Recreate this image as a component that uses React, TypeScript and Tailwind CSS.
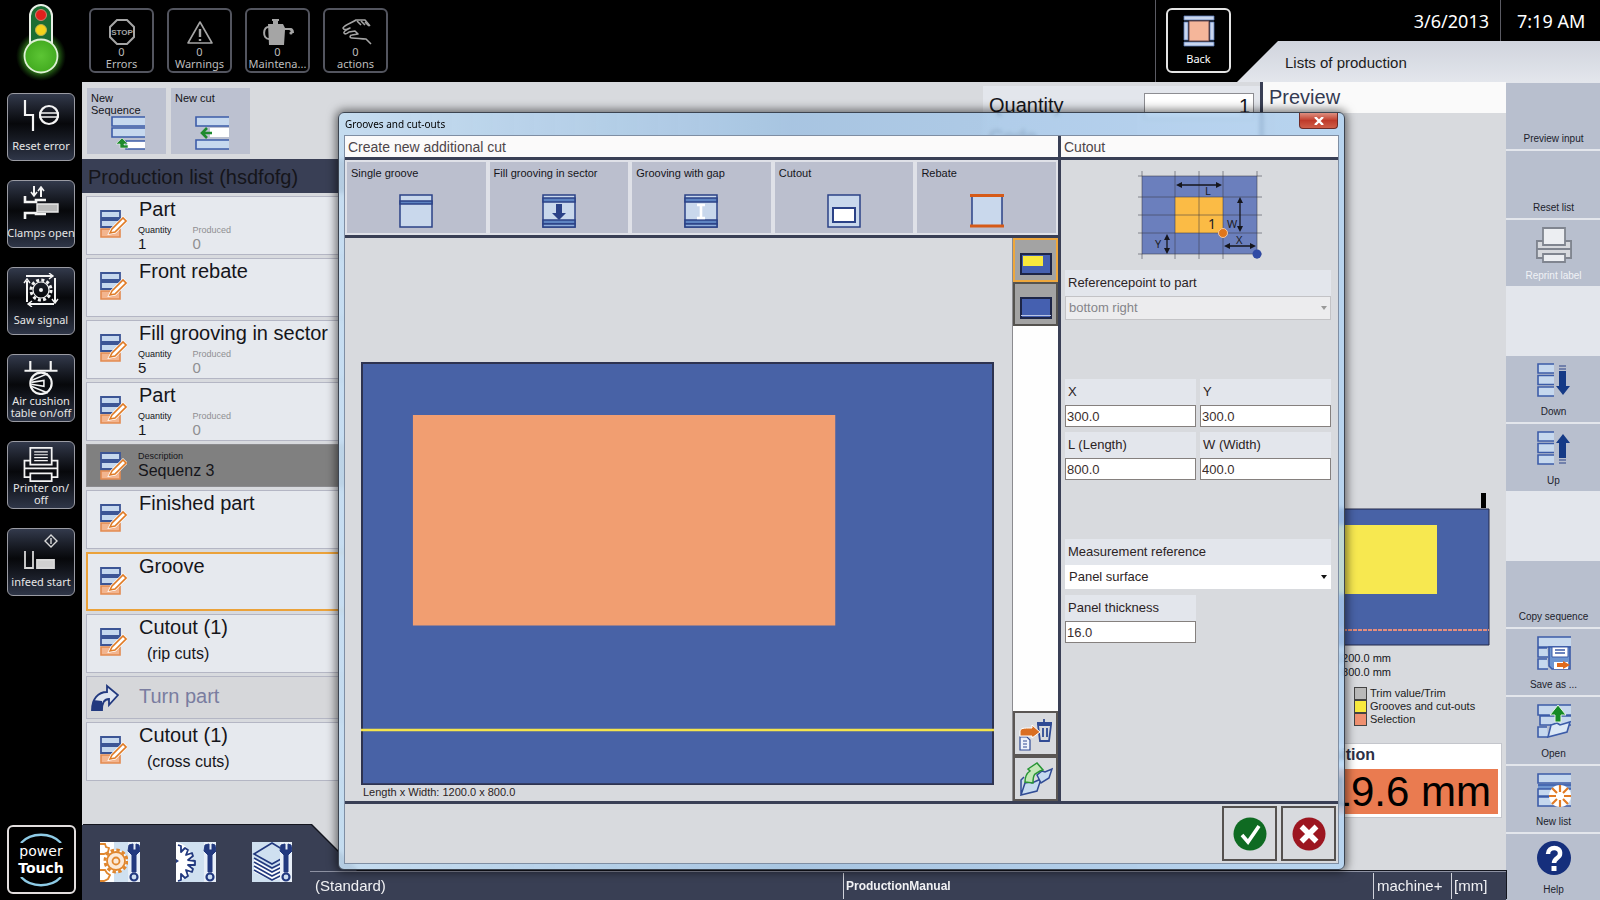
import type { ReactNode } from "react";

const NAVY = "#2b4287";
const PALE = "#c6d8ee";

/* ---------- status and machine icons ---------- */

function TrafficLight() {
  return (
    <svg viewBox="0 0 60 82" className="h-[82px] w-[60px]" role="img" aria-label="Machine status">
      <defs>
        <radialGradient id="halo">
          <stop offset="60%" stopColor="#4fc02c" stopOpacity="0.75" />
          <stop offset="100%" stopColor="#2a7a18" stopOpacity="0" />
        </radialGradient>
        <radialGradient id="bulb">
          <stop offset="0%" stopColor="#5cc534" />
          <stop offset="100%" stopColor="#43ab20" />
        </radialGradient>
      </defs>
      <circle cx="30" cy="56" r="25" fill="url(#halo)" />
      <path d="M19 44V16a11 11 0 0 1 22 0v28z" fill="#1b6d33" stroke="#e9efe6" strokeWidth="2" />
      <circle cx="30" cy="15" r="5.500" fill="#e0201c" stroke="#c98470" strokeWidth="1" />
      <circle cx="30" cy="30" r="5.500" fill="#f2d21c" stroke="#b9b04e" strokeWidth="1" />
      <circle cx="30" cy="56" r="16.500" fill="url(#bulb)" stroke="#dff0d6" strokeWidth="1.8" />
    </svg>
  );
}

function StopIcon() {
  return (
    <svg viewBox="0 0 28 28" className="size-7" fill="none" stroke="#a5a5a5">
      <path d="M9 2h10l7 7v10l-7 7H9l-7-7V9z" strokeWidth="2" />
      <text x="14" y="17" textAnchor="middle" fontSize="8" fontWeight="700" fontFamily="Liberation Sans" fill="#a5a5a5" stroke="none">
        STOP
      </text>
    </svg>
  );
}

function WarningIcon() {
  return (
    <svg viewBox="0 0 28 28" className="size-7" fill="none" stroke="#a5a5a5" strokeWidth="1.6">
      <path d="M14 4l12 21H2z" strokeLinejoin="round" />
      <path d="M14 11v8M14 21v2" strokeWidth="2.4" />
    </svg>
  );
}

function OilCanIcon() {
  return (
    <svg viewBox="0 0 32 28" className="h-7 w-8" fill="#a5a5a5">
      <path d="M6 6h5V3h-1V1h7v2h-1v3h5l2 4h5c3 0 4 2 4 5h-3c0-2-1-3-2-3h-4l-1 15H7z" />
      <path d="M7 9c-6-1-7 12 0 12" fill="none" stroke="#a5a5a5" strokeWidth="2" />
      <circle cx="29" cy="15" r="1.6" />
    </svg>
  );
}

function HandIcon() {
  return (
    <svg viewBox="0 0 32 28" className="h-7 w-8" fill="none" stroke="#a5a5a5" strokeWidth="1.6" strokeLinejoin="round">
      <path d="M31 26l-5-5c-5 0-9-1-14-1-3 0-2-3 0-3l6-1-3-3-6 1c-1 1-4 3-5 1s5-4 6-5c-3 1-6 3-7 0 2-4 9-5 13-8h9l5 6" />
      <path d="M17 3l4 4M21 3l4 4M25 4l4 4" />
    </svg>
  );
}

function BackIcon() {
  return (
    <svg viewBox="0 0 32 32" className="size-8">
      <path d="M1 1h30v4H1zM1 27h30v4H1zM1 7h4v18H1zM27 7h4v18h-4z" fill="#c9d6ee" stroke="#5b7bb8" strokeWidth="0.8" />
      <path d="M6 6h20v20H6z" fill="#f5b69a" stroke="#6b4a50" strokeWidth="1" />
    </svg>
  );
}

function ResetIcon() {
  return (
    <svg viewBox="0 0 36 34" className="h-[34px] w-9" fill="none" stroke="#f4f4f4" strokeWidth="2.2">
      <path d="M2 1v15h8v16" />
      <circle cx="26" cy="16" r="9" />
      <path d="M16 14h20M16 18h20" strokeWidth="1.6" />
    </svg>
  );
}

function ClampIcon() {
  return (
    <svg viewBox="0 0 36 34" className="h-[34px] w-9" fill="none" stroke="#f4f4f4" strokeWidth="2.6">
      <path d="M2 10v6h11v-2h10M2 33v-6h11v1h10" />
      <path d="M14 18h21v8H14z" fill="#b9b9b9" stroke="#e8e8e8" strokeWidth="1.4" />
      <path d="M11 0v9M18 11V2" strokeWidth="2" />
      <path d="M8 6l3 4 3-4M15 5l3-4 3 4" strokeWidth="1.6" />
    </svg>
  );
}

function SawIcon() {
  return (
    <svg viewBox="0 0 36 34" className="h-[34px] w-9" fill="none" stroke="#f4f4f4" strokeWidth="2">
      <path d="M3 3h26M32 5v24M31 31H6M4 29V8" />
      <path d="M26 0l4 3-4 3M29 26l3 4 3-4M9 28l-4 3 4 3M1 10l3-4 3 4" strokeWidth="1.4" />
      <circle cx="18" cy="17" r="10" strokeWidth="3" strokeDasharray="3 2.24" />
      <circle cx="18" cy="17" r="8" strokeWidth="1.2" />
      <circle cx="18" cy="17" r="2" fill="#f4f4f4" stroke="none" />
    </svg>
  );
}

function AirIcon() {
  return (
    <svg viewBox="0 0 36 36" className="size-9" fill="none" stroke="#f4f4f4" strokeWidth="2.2">
      <path d="M7 1v9M28 1v9M1 11h34" />
      <circle cx="18" cy="24" r="11" />
      <path d="M8 21l17-7M8 27l17 7M8 23l13-2v6l-13-2" strokeWidth="1.6" />
    </svg>
  );
}

function PrinterIcon({ pale = false }: { pale?: boolean }) {
  const stroke = pale ? "#808590" : "#f4f4f4";
  const fill = pale ? "#eceef2" : "none";
  return (
    <svg viewBox="0 0 36 36" className="size-9" fill={fill} stroke={stroke} strokeWidth="1.8">
      <path d="M7 14H1v17h6M29 14h6v17h-6" fill={pale ? "#d7d9de" : "none"} />
      {pale && <path d="M1 14h34v17H1z" fill="#d7d9de" />}
      <path d="M7 18V1h22v17z" />
      <path d="M1 22h34" />
      <path d="M7 27h22v8H7z" />
      {!pale && <path d="M11 5h14M11 8h14M11 11h14M11 14h14" strokeWidth="1.2" />}
    </svg>
  );
}

function InfeedIcon() {
  return (
    <svg viewBox="0 0 36 36" className="size-9" fill="none" stroke="#d8d8d8" strokeWidth="1.8">
      <path d="M2 17v17h8V17" />
      <path d="M14 26h17v8H14z" fill="#d0d0d0" />
      <path d="M28 1l6 6-6 6-6-6zM28 4v6" strokeWidth="1.4" />
    </svg>
  );
}

/* ---------- list and tool icons ---------- */

function EditStackIcon() {
  return (
    <svg viewBox="0 0 28 28" className="size-7 shrink-0" aria-hidden="true">
      <path d="M2 1h19v7H2zM2 10h19v7H2z" fill={PALE} stroke="#3c5595" strokeWidth="1.8" />
      <path d="M2 19h19v8H2z" fill="#f3b58f" stroke="#e38a50" strokeWidth="1.6" />
      <path d="M11 23l2-4L24 8l3 3-11 11z" fill="#fff" stroke="#fff" strokeWidth="3" />
      <path d="M11 23l2-4L24 8l3 3-11 11z" fill="#fff" stroke="#e07b26" strokeWidth="1.6" />
    </svg>
  );
}

function TurnIcon() {
  return (
    <svg viewBox="0 0 28 28" className="size-7 shrink-0" aria-hidden="true">
      <path d="M1 26C1 15 7 8 16 8V2l11 9-9 10v-6c-4 0-7 3-7 11z" fill="#dfe5f0" stroke="#22397f" strokeWidth="1.8" />
      <path d="M2 16l9 1v9H1z" fill="#22397f" />
    </svg>
  );
}

function NewSequenceIcon() {
  return (
    <svg viewBox="0 0 34 34" className="size-[34px]" fill={PALE} stroke="#3c5ca8" strokeWidth="1.6">
      <path d="M34 1H1v9h33M34 12H1v9h33" />
      <path d="M34 25H15v8h19" fill="#fff" />
      <path d="M17 32h-8v-4H5l6-6 6 6h-4v1h4z" fill="#1e8a2e" stroke="#e9f3ea" strokeWidth="0.6" />
    </svg>
  );
}

function NewCutIcon() {
  return (
    <svg viewBox="0 0 34 34" className="size-[34px]" fill={PALE} stroke="#3c5ca8" strokeWidth="1.6">
      <path d="M34 1H1v9h33M34 24H1v9h33" />
      <path d="M15 12h19v9H15z" fill="#fff" stroke="none" />
      <path d="M17 17H8M12 12l-5 5 5 5" fill="none" stroke="#1e8a2e" strokeWidth="2.6" />
    </svg>
  );
}

function GrooveIcon({ kind }: { kind: "single" | "fill" | "gap" | "cutout" | "rebate" }) {
  return (
    <svg viewBox="0 0 34 34" className="size-[34px]" fill="#c9d8ec" stroke={NAVY} strokeWidth="1.5" aria-hidden="true">
      {kind === "single" && (
        <>
          <path d="M1 1h32v32H1z" />
          <path d="M1 7h32v3H1z" fill="#5e84c2" />
        </>
      )}
      {(kind === "fill" || kind === "gap") && (
        <>
          <path d="M1 1h32v32H1z" />
          <path d="M1 4h32v4H1zM1 26h32v4H1z" fill="#5e84c2" />
          <path d="M1 30h32v3H1z" fill="#8faedb" />
        </>
      )}
      {kind === "fill" && <path d="M14 10h6v9h4l-7 7-7-7h4z" fill={NAVY} stroke="none" />}
      {kind === "gap" && <path d="M17 11v13M13 11h8M13 24h8" stroke="#fff" strokeWidth="2.6" />}
      {kind === "cutout" && (
        <>
          <path d="M1 1h32v32H1z" />
          <path d="M6 14h22v14H6z" fill="#fff" strokeWidth="2" />
        </>
      )}
      {kind === "rebate" && (
        <>
          <path d="M2 2h30v30H2z" />
          <path d="M0 1.5h34M0 32h34" stroke="#d65a17" strokeWidth="2.8" />
        </>
      )}
    </svg>
  );
}

function StackBase({ children }: { children: ReactNode }) {
  return (
    <svg viewBox="0 0 34 34" className="size-[34px]" fill={PALE} stroke="#3c5ca8" strokeWidth="1.6" aria-hidden="true">
      {children}
    </svg>
  );
}

const downIcon = (
  <StackBase>
    <path d="M17 1H1v9h16M17 12.500H1v9h16M17 24H1v9h16" />
    <path d="M22 3h7M22 6h7" stroke={NAVY} strokeWidth="1.2" />
    <path d="M22 8h7v15h4l-7 9-7-9h3z" fill="#153a86" stroke="none" />
  </StackBase>
);
const upIcon = (
  <StackBase>
    <path d="M17 1H1v9h16M17 12.500H1v9h16M17 24H1v9h16" />
    <path d="M22 29h7M22 32h7" stroke={NAVY} strokeWidth="1.2" />
    <path d="M22 27h7V12h4l-7-9-7 9h3z" fill="#153a86" stroke="none" />
  </StackBase>
);
const saveIcon = (
  <StackBase>
    <path d="M34 1H1v10h33M10 12H1v9h10M10 23H1v10h10" />
    <path d="M12 11h21v22H15l-3-3z" fill="#6e95d0" />
    <path d="M15 11h16v10H15z" fill="#fff" strokeWidth="1" />
    <path d="M18 14h10M18 17h10" strokeWidth="1.4" />
    <path d="M17 26h14v7H17z" fill="#fff" stroke="none" />
    <path d="M20 27h6v-2l7 4-7 4v-2h-6z" fill="#e06a1c" stroke="none" />
  </StackBase>
);
const openIcon = (
  <StackBase>
    <path d="M34 1H1v10h33M34 12H3v9h31M10 23H1v10h10" />
    <path d="M11 33l3-12 6-2 3 2 10-3-3 10z" fill="#dbe8f6" />
    <path d="M18 18v-7h-5l8-10 8 10h-5v7z" fill="#158a24" stroke="#e4f2e4" strokeWidth="1" />
  </StackBase>
);
const newListIcon = (
  <StackBase>
    <path d="M34 1H1v9h33" />
    <path d="M34 11H1v5h33" fill="#6e95d0" stroke="none" />
    <path d="M34 12H1M34 16H1v7h33M34 24H1v9h33" />
    <circle cx="23" cy="23" r="11" fill="#fff" stroke="none" />
    <path d="M23 12v7M23 27v7M12 23h7M27 23h7M15 15l5 5M26 26l5 5M31 15l-5 5M20 26l-5 5" stroke="#e17b25" strokeWidth="2.2" />
  </StackBase>
);
const helpIcon = (
  <svg viewBox="0 0 34 34" className="size-[34px]" aria-hidden="true">
    <circle cx="17" cy="17" r="17" fill="#152f7c" />
    <path d="M11 13c0-8 13-8 12 0 0 4-6 4-6 9" fill="none" stroke="#fff" strokeWidth="4.5" />
    <path d="M14.500 25h5v5h-5z" fill="#fff" />
  </svg>
);

function Wrench({ x }: { x: number }) {
  return (
    <g transform={`translate(${x} 0)`} stroke="#22397f" fill="#22397f">
      <path d="M0 3l-1 6 4 4v17h4V13l4-4-1-6-3-1v6H4V2z" />
      <circle cx="5" cy="35" r="3.500" fill="#cfdff0" strokeWidth="2.2" />
    </g>
  );
}

function SettingsIcon({ kind }: { kind: "gears" | "saw" | "layers" }) {
  return (
    <svg viewBox="0 0 40 40" className="size-10" fill="none" aria-hidden="true">
      <path d="M0 0h40v40H0z" fill="#cfe0f0" />
      {kind === "gears" && (
        <g stroke="#e0872f" strokeWidth="1.8">
          <path d="M0 0h14v40H0z" fill="#fff" stroke="none" />
          <circle cx="16" cy="19" r="11" strokeDasharray="3.400 2.360" strokeWidth="3" fill="#fff" />
          <circle cx="16" cy="19" r="9" fill="#fbe9d8" />
          <circle cx="16" cy="19" r="3.500" />
          <path d="M0 2h5l1 3 3 1-1 4-4 2H0M0 28h5l2 3 3 2-2 4-4 2H0" />
        </g>
      )}
      {kind === "saw" && (
        <>
          <path d="M0 0c20 4 25 33 0 40z" fill="#fff" />
          <path
            d="M2 3l3 1v6l4-4 3 2-2 5 6-2 1 3-5 4 7 1v4h-7l5 4-1 3-6-2 2 6-3 2-4-4v6l-3 1"
            stroke="#22397f"
            strokeWidth="1.8"
            strokeLinejoin="round"
          />
          <path d="M0 17l3 2-3 2z" fill="#22397f" />
        </>
      )}
      {kind === "layers" && (
        <>
          <path d="M2 12L20 1l18 11-18 10zM2 17l18 11 18-11v17L20 39 2 30z" fill="#fff" />
          <path d="M2 12L20 1l18 11-18 10z" fill="#cfe0f0" />
          <path d="M2 12L20 1l18 11-18 10zM2 16l18 10 12-6M2 20l18 10 12-6M2 24l18 10 12-6M2 28l18 10 12-6" stroke="#22397f" strokeWidth="1.6" />
        </>
      )}
      <path d="M28 0h12v40H28z" fill="#e8eff8" />
      <Wrench x={29} />
    </svg>
  );
}

/* ---------- top bar and machine rail ---------- */

function StatusButton({ icon, label }: { icon: ReactNode; label: string }) {
  return (
    <button className="flex h-[65px] w-[65px] flex-col items-center justify-end rounded-md border-2 border-[#53555f] bg-black pb-px text-[11px] leading-[12px] text-[#bdbdbd]">
      {icon}
      <span>0</span>
      <span className="whitespace-nowrap">{label}</span>
    </button>
  );
}

function TopBar() {
  return (
    <header className="flex h-[82px] shrink-0 bg-black font-['Noto_Sans',sans-serif] text-white">
      <div className="flex flex-1 gap-[13px] pt-[8px] pl-[7px]">
        <StatusButton icon={<StopIcon />} label="Errors" />
        <StatusButton icon={<WarningIcon />} label="Warnings" />
        <StatusButton icon={<OilCanIcon />} label="Maintena..." />
        <StatusButton icon={<HandIcon />} label="actions" />
      </div>
      <div className="border-l border-[#5b5b63] pt-[8px] pl-[10px]">
        <button className="flex h-[65px] w-[65px] flex-col items-center justify-center gap-[5px] rounded-md border-2 border-[#e4e4e4] bg-black text-[11px] leading-[14px]">
          <BackIcon />
          Back
        </button>
      </div>
      <div className="flex w-[369px] flex-col pl-[6px]">
        <div className="flex h-[41px] justify-end text-[18px] leading-[43px]">
          <time className="pr-[11px]">3/6/2013</time>
          <time className="w-[100px] border-l border-[#5b5b63] pl-[16px]">7:19 AM</time>
        </div>
        <h1 className="flex h-[41px] items-center bg-linear-to-b from-[#d0d4dd] to-[#e3e6ec] pt-[3px] pl-[48px] font-['Liberation_Sans',sans-serif] text-[15px] text-[#1c1c1c] [clip-path:polygon(41px_0,100%_0,100%_100%,0_100%)]">
          Lists of production
        </h1>
      </div>
    </header>
  );
}

const machineActions = [
  { label: "Reset error", icon: <ResetIcon /> },
  { label: "Clamps open", icon: <ClampIcon /> },
  { label: "Saw signal", icon: <SawIcon /> },
  { label: "Air cushion\ntable on/off", icon: <AirIcon /> },
  { label: "Printer on/\noff", icon: <PrinterIcon /> },
  { label: "infeed start", icon: <InfeedIcon /> },
];

function MachineRail() {
  return (
    <nav className="flex w-[82px] shrink-0 flex-col items-center bg-black font-['Noto_Sans',sans-serif] text-white">
      <TrafficLight />
      <div className="mt-[11px] flex flex-col gap-[19px]">
        {machineActions.map((a) => (
          <button
            key={a.label}
            className="flex size-[68px] flex-col items-center rounded-md border border-[#9a9ba3] bg-linear-to-b from-[#333a4c] via-[#07080b] via-45% to-[#2f3648] pt-[5px] pb-[2px] text-[11px] leading-[12px] text-[#e6e6e6]"
          >
            {a.icon}
            <span className="flex flex-1 items-center whitespace-pre">{a.label}</span>
          </button>
        ))}
      </div>
      <button className="mt-auto mb-[6px] flex size-[69px] flex-col items-center justify-center rounded-md border-2 border-[#e2dede] bg-black font-['DejaVu_Sans',sans-serif] text-[14px] leading-[17px]">
        <svg viewBox="0 0 48 10" className="h-[10px] w-12" fill="none" stroke="#8ecbe6" strokeWidth="2.4">
          <path d="M4 10C14-1 34-1 44 10" />
        </svg>
        <span>power</span>
        <b>Touch</b>
        <svg viewBox="0 0 48 10" className="h-[10px] w-12" fill="none" stroke="#8ecbe6" strokeWidth="2.4">
          <path d="M4 0C14 11 34 11 44 0" />
        </svg>
      </button>
    </nav>
  );
}

/* ---------- production list ---------- */

type Item = {
  title: string;
  note?: string;
  quantity?: number;
  kind?: "sequence" | "turn" | "selected";
};

const items: Item[] = [
  { title: "Part", quantity: 1 },
  { title: "Front rebate" },
  { title: "Fill grooving in sector", quantity: 5 },
  { title: "Part", quantity: 1 },
  { title: "Sequenz 3", kind: "sequence" },
  { title: "Finished part" },
  { title: "Groove", kind: "selected" },
  { title: "Cutout (1)", note: "(rip cuts)" },
  { title: "Turn part", kind: "turn" },
  { title: "Cutout (1)", note: "(cross cuts)" },
];

function ListRow({ item }: { item: Item }) {
  if (item.kind === "sequence") {
    return (
      <li className="flex h-[43px] items-center gap-[11px] border border-[#8b8b8e] bg-[#808080] pl-[12px]">
        <EditStackIcon />
        <div className="pb-px">
          <div className="text-[9px] leading-[12px]">Description</div>
          <div className="text-[16px] leading-[18px]">{item.title}</div>
        </div>
      </li>
    );
  }
  if (item.kind === "turn") {
    return (
      <li className="flex h-[43px] items-center gap-[20px] border border-[#b4b6c4] bg-[#d6d7da] pl-[4px] text-[20px] leading-[20px] text-[#7a7da0]">
        <TurnIcon />
        <span className="pb-[4px]">{item.title}</span>
      </li>
    );
  }
  const frame = item.kind === "selected" ? "border-2 border-[#eba23a] pl-[11px]" : "border border-[#b4b6c4] pl-[12px]";
  return (
    <li className={"flex h-[59px] items-start gap-[11px] bg-[#e6e9ee] " + frame}>
      <div className="pt-[13px]">
        <EditStackIcon />
      </div>
      <div>
        <div className="pl-px text-[20px] leading-[24px]">{item.title}</div>
        {item.note && <div className="pt-[5px] pl-[9px] text-[16px] leading-[20px]">{item.note}</div>}
        {item.quantity !== undefined && (
          <dl className="flex gap-[21px] pt-[3px]">
            <div>
              <dt className="text-[9px] leading-[12px]">Quantity</dt>
              <dd className="text-[15px] leading-[15px]">{item.quantity}</dd>
            </div>
            <div className="text-[#8f8f92]">
              <dt className="text-[9px] leading-[12px]">Produced</dt>
              <dd className="text-[15px] leading-[15px]">0</dd>
            </div>
          </dl>
        )}
      </div>
    </li>
  );
}

function ProductionList() {
  return (
    <main className="flex min-w-0 flex-1 flex-col">
      <div className="flex h-[77px] shrink-0 justify-between pl-[5px]">
        <div className="flex gap-[5px] pt-[6px]">
          <button className="flex h-[66px] w-[79px] flex-col items-start bg-[#bcc1d0] px-[4px] pt-[4px] text-left text-[11px] leading-[12px]">
            New Sequence
            <span className="self-center pl-[2px]">
              <NewSequenceIcon />
            </span>
          </button>
          <button className="flex h-[66px] w-[79px] flex-col items-start bg-[#bcc1d0] px-[4px] pt-[4px] text-left text-[11px] leading-[12px]">
            New cut
            <span className="mt-[12px] self-center pl-[2px]">
              <NewCutIcon />
            </span>
          </button>
        </div>
        <div className="mt-[4px] flex w-[277px] flex-col gap-[6px] bg-[#e3e6ec] px-[6px] pt-[7px] text-[20px] leading-[24px]">
          <div className="flex justify-between">
            <label htmlFor="quantity">Quantity</label>
            <input id="quantity" defaultValue="1" className="w-[110px] border border-[#8d8d92] bg-white pr-[3px] text-right" />
          </div>
          <div>Code</div>
        </div>
      </div>
      <h2 className="h-[34px] shrink-0 bg-[#393f55] pl-[6px] text-[20px] leading-[37px]">Production list (hsdfofg)</h2>
      <ul className="mt-[3px] ml-[4px] flex flex-1 flex-col gap-[3px]">
        {items.map((item, i) => (
          <ListRow key={i} item={item} />
        ))}
      </ul>
    </main>
  );
}

/* ---------- preview ---------- */

const legend = [
  { label: "Trim value/Trim", swatch: "bg-[#b9b9b9]" },
  { label: "Grooves and cut-outs", swatch: "bg-[#f8ea3e]" },
  { label: "Selection", swatch: "bg-[#ef9070]" },
];

function Preview() {
  return (
    <aside className="flex w-[246px] shrink-0 flex-col border-l-3 border-[#393f55]">
      <h2 className="h-[31px] shrink-0 bg-[#fafafa] pl-[6px] text-[20px] leading-[30px] text-[#343a52]">Preview</h2>
      <svg viewBox="0 0 227 154" className="mt-auto h-[154px] w-[227px]" role="img" aria-label="Panel preview">
        <path d="M0 17h226v136H0z" fill="#4862a6" stroke="#22284a" strokeWidth="1" />
        <path d="M20 33h154v69H20z" fill="#f7e850" />
        <path d="M0 138h226" stroke="#e58e7c" strokeWidth="2" strokeDasharray="4 1" />
        <path d="M218 1h5v15h-5z" fill="#000" />
      </svg>
      <div className="w-[128px] pt-[5px] text-right text-[11px] leading-[14px]">
        <div>1200.0 mm</div>
        <div>800.0 mm</div>
      </div>
      <ul className="pt-[8px] pl-[91px] text-[11px] leading-[13px] text-[#222]">
        {legend.map((l) => (
          <li key={l.label} className="flex items-center gap-[3px] whitespace-nowrap">
            <span className={"size-[13px] border border-[#444] " + l.swatch} />
            {l.label}
          </li>
        ))}
      </ul>
      <section className="mt-[17px] mr-[4px] mb-[7px] border border-[#c4c6cc] bg-white px-[3px] pb-[3px]">
        <h3 className="h-[25px] pl-[45px] text-[16px] leading-[22px] font-bold text-[#2c3046]">Position</h3>
        <p className="bg-[#ea7b50] pr-[7px] text-right text-[42px] leading-[45px] text-black">19.6 mm</p>
      </section>
    </aside>
  );
}

/* ---------- right tool column ---------- */

const tools: { label: string; icon?: ReactNode; disabled?: boolean }[] = [
  { label: "Preview input" },
  { label: "Reset list" },
  { label: "Reprint label", icon: <PrinterIcon pale />, disabled: true },
  { label: "" },
  { label: "Down", icon: downIcon },
  { label: "Up", icon: upIcon },
  { label: "" },
  { label: "Copy sequence" },
  { label: "Save as ...", icon: saveIcon },
  { label: "Open", icon: openIcon },
  { label: "New list", icon: newListIcon },
  { label: "Help", icon: helpIcon },
];

function ToolColumn() {
  return (
    <nav className="grid w-[94px] shrink-0 auto-rows-fr gap-[2px] bg-[#e3e6ec] pt-px">
      {tools.map((t, i) =>
        t.label ? (
          <button
            key={i}
            disabled={t.disabled}
            className="flex flex-col items-center justify-between bg-[#b8bfce] pt-[7px] pb-[3px] pl-px text-[10px] leading-[14px] text-[#20222c] disabled:text-[#f0f2f6]"
          >
            <span className="h-9">{t.icon}</span>
            {t.label}
          </button>
        ) : (
          <div key={i} />
        ),
      )}
    </nav>
  );
}

/* ---------- status bar ---------- */

function Footer() {
  return (
    <footer className="-mt-[46px] shrink-0 [filter:drop-shadow(1px_-1px_0_#14161f)]">
      <div className="flex h-[75px] items-end bg-[#393f54] text-[15px] text-[#f1f1f4] [clip-path:polygon(0_0,229px_0,275px_46px,100%_46px,100%_100%,0_100%)]">
        <nav className="flex w-[228px] shrink-0 gap-9 self-start pt-[17px] pl-[18px]">
          <button aria-label="Machine settings">
            <SettingsIcon kind="gears" />
          </button>
          <button aria-label="Saw blade settings">
            <SettingsIcon kind="saw" />
          </button>
          <button aria-label="Material settings">
            <SettingsIcon kind="layers" />
          </button>
        </nav>
        <div className="flex h-[29px] flex-1 items-center border-t border-[#8d91a2] leading-[26px]">
          <span className="w-[533px] pl-[5px]">(Standard)</span>
          <span className="flex-1 border-l border-[#d0d2da] pl-[2px] text-[12px] font-bold">ProductionManual</span>
          <span className="w-[78px] border-l border-[#d0d2da] pl-[3px]">machine+</span>
          <span className="w-[55px] border-l border-[#d0d2da] pl-[2px]">[mm]</span>
        </div>
      </div>
    </footer>
  );
}

/* ---------- dialog ---------- */

const cutTypes = [
  { label: "Single groove", kind: "single" },
  { label: "Fill grooving in sector", kind: "fill" },
  { label: "Grooving with gap", kind: "gap" },
  { label: "Cutout", kind: "cutout" },
  { label: "Rebate", kind: "rebate" },
] as const;

function PanelDrawing() {
  return (
    <svg viewBox="0 0 634 424" className="h-auto w-full" role="img" aria-label="Panel with cutout and groove">
      <path d="M1 1h632v422H1z" fill="#4862a6" stroke="#2e3350" strokeWidth="2" />
      <path d="M52 53h423v211H52z" fill="#f19e71" />
      <path d="M0 368.500h634" stroke="#f5e44c" strokeWidth="2.500" />
    </svg>
  );
}

function ReferenceDiagram() {
  return (
    <svg viewBox="0 0 130 94" className="h-[94px] w-[130px]" role="img" aria-label="Cutout dimensions">
      <path d="M7 8h115v78H7z" fill="#6b7fbd" />
      <path d="M40 29h48v36H40z" fill="#fbbb45" />
      <path d="M7 3v88M40 3v88M64 3v88M88 3v88M122 3v88M3 8h124M3 29h124M3 47h124M3 65h124M3 86h124" stroke="#3a3a44" strokeOpacity="0.6" strokeWidth="0.9" />
      <path d="M43 17h42M105 32v29M91 78h28M32 69v14" stroke="#16161c" strokeWidth="1.3" />
      <path
        d="M41 17l6-3v6zM87 17l-6-3v6zM105 29l-3 6h6zM105 64l-3-6h6zM89 78l6-3v6zM121 78l-6-3v6zM32 66l-3 6h6zM32 86l-3-6h6z"
        fill="#16161c"
      />
      <g fontFamily="Noto Sans, sans-serif" fontSize="11" fill="#1c1c26">
        <text x="70" y="27">L</text>
        <text x="92" y="60">W</text>
        <text x="101" y="76">X</text>
        <text x="20" y="80">Y</text>
        <text x="73" y="61" fontSize="14">1</text>
      </g>
      <circle cx="88" cy="65" r="4.500" fill="#e0761d" stroke="#f4c9a0" strokeWidth="1" />
      <circle cx="122" cy="86" r="4.500" fill="#2f4aa5" />
    </svg>
  );
}

function Field({ id, label, value }: { id: string; label: string; value: string }) {
  return (
    <div className="flex flex-col">
      <label htmlFor={id} className="bg-[#e3e6ec] pl-[3px] leading-[26px]">
        {label}
      </label>
      <input id={id} defaultValue={value} className="h-[22px] w-full border border-[#85807e] bg-white px-px text-[#3a2d2d]" />
    </div>
  );
}

function SelectField({ id, label, value, disabled }: { id: string; label: string; value: string; disabled?: boolean }) {
  return (
    <div className="relative flex flex-col">
      <label htmlFor={id} className="bg-[#e3e6ec] pl-[3px] leading-[26px]">
        {label}
      </label>
      <select
        id={id}
        disabled={disabled}
        className="h-[24px] appearance-none border border-white bg-white px-[3px] pb-px text-[#2d2526] disabled:border-[#c3c3c6] disabled:bg-[#ececee] disabled:text-[#85858a] disabled:opacity-100"
      >
        <option>{value}</option>
      </select>
      <svg viewBox="0 0 6 4" className="pointer-events-none absolute right-1 bottom-[10px] h-1 w-1.5" fill={disabled ? "#999" : "#111"}>
        <path d="M0 0h6L3 4z" />
      </svg>
    </div>
  );
}

function Thumbnail({ selected }: { selected?: boolean }) {
  return (
    <button
      aria-label={selected ? "Top face" : "Bottom face"}
      className={"flex h-[44px] items-end justify-center border-2 bg-[#a3a3a3] pb-[5px] " + (selected ? "border-[#eea73c]" : "border-[#55534f]")}
    >
      <svg viewBox="0 0 32 22" className="h-[22px] w-8">
        <path d="M1 1h30v20H1z" fill="#4560b0" stroke="#1d2547" strokeWidth="2" />
        {selected ? <path d="M3 3h20v10H3z" fill="#f8e83c" /> : <path d="M1 18.500h30" stroke="#b9c4e4" strokeWidth="1" />}
      </svg>
    </button>
  );
}

function CutDialog() {
  return (
    <div
      role="dialog"
      aria-label="Grooves and cut-outs"
      className="absolute top-[112px] right-[255px] bottom-[30px] left-[338px] flex flex-col rounded-md border border-[#3c4450] bg-linear-to-r from-[#c3dcf1e6] via-[#9dc0e2d0] via-45% to-[#b0d2f2cc] px-[6px] pb-[6px] shadow-[0_0_10px_2px_rgba(0,0,0,0.55)] backdrop-blur-[2px]"
    >
      <div className="flex h-[23px] shrink-0 items-start justify-between">
        <h2 className="font-['Noto_Sans',sans-serif] text-[10px] leading-[22px] text-black">Grooves and cut-outs</h2>
        <button
          aria-label="Close"
          className="flex h-[16px] w-[39px] items-center justify-center rounded-b-sm border border-t-0 border-[#6d2a26] bg-linear-to-b from-[#dd8f80] via-[#bf3a2a] to-[#cf5d48]"
        >
          <svg viewBox="0 0 10 8" className="h-2 w-2.5" stroke="#fff" strokeWidth="2.4">
            <path d="M1 0l8 8M9 0L1 8" />
          </svg>
        </button>
      </div>
      <div className="flex min-h-0 flex-1 flex-col bg-[#d8dade] outline outline-[#7f8ea3]">
        <div className="flex min-h-0 flex-1 border-b-3 border-[#393f55]">
          <section className="flex min-w-0 flex-1 flex-col">
            <h3 className="h-[24px] shrink-0 border-b-3 border-[#393f55] bg-[#fbfafa] pl-[3px] text-[14px] leading-[22px] text-[#4d4549]">
              Create new additional cut
            </h3>
            <div className="flex h-[78px] shrink-0 gap-[4px] border-b-3 border-[#393f55] bg-[#dfe1e8] p-[2px]">
              {cutTypes.map((c) => (
                <button
                  key={c.kind}
                  className="flex min-w-0 flex-1 flex-col items-start bg-[#bbbfce] px-[4px] pt-[4px] text-[11px] leading-[15px] whitespace-nowrap"
                >
                  {c.label}
                  <span className="mt-[13px] self-center">
                    <GrooveIcon kind={c.kind} />
                  </span>
                </button>
              ))}
            </div>
            <div className="flex min-h-0 flex-1">
              <div className="flex min-w-0 flex-1 flex-col justify-end pr-[18px] pl-[16px]">
                <PanelDrawing />
                <p className="pb-px pl-[2px] text-[11px] leading-[15px] text-[#2b2324]">Length x Width: 1200.0 x 800.0</p>
              </div>
              <div className="flex w-[46px] flex-col border-l border-[#8b8b8f] bg-[#fefefe]">
                <Thumbnail selected />
                <Thumbnail />
                <button aria-label="Delete cut" className="mt-auto flex h-[45px] items-center justify-center border-2 border-[#5a5654] bg-[#d8dade]">
                  <svg viewBox="0 0 34 34" className="size-[34px]" fill="none" stroke="#304b94" strokeWidth="1.8">
                    <path d="M18 6h15M25 2v3M19 8l2 16h9l2-16zM24 11v9M28 11v9" />
                    <path d="M1 20h7l3 3v10H1zM4 24h4M4 27h4M4 30h4" fill="#eef2fa" strokeWidth="1.2" />
                    <path d="M1 19v-5c1-3 3-3 12-3V8l8 7-8 6v-2z" fill="#d96f23" stroke="#fff" strokeWidth="1" />
                  </svg>
                </button>
                <button aria-label="Load cut" className="flex h-[45px] items-center justify-center border-2 border-[#5a5654] bg-[#d8dade]">
                  <svg viewBox="0 0 34 34" className="size-[34px]" fill="#c6dbf0" stroke="#304b94" strokeWidth="1.5">
                    <path d="M2 33V18l3-3M2 33l4-12 5-1 2 1 9-4-4 12z" />
                    <path d="M18 13l5-4 3 1 7-3-3 9-8 5z" />
                    <path d="M6 20c0-6 2-9 5-11L9 7l9-6 6 7-3 1-5 3c-2 2-2 5-2 9z" fill="#c4e7b8" stroke="#279534" />
                  </svg>
                </button>
              </div>
            </div>
          </section>
          <section className="flex w-[280px] shrink-0 flex-col border-l-3 border-[#393f55]">
            <h3 className="h-[24px] shrink-0 border-b-3 border-[#393f55] bg-[#fbfafa] pl-[3px] text-[14px] leading-[22px] text-[#4d4549]">Cutout</h3>
            <form className="flex flex-col pr-[7px] pl-[4px] text-[13px] text-[#2b2324]">
              <div className="flex justify-center py-[8px] pl-[3px]">
                <ReferenceDiagram />
              </div>
              <SelectField id="reference-point" label="Referencepoint to part" value="bottom right" disabled />
              <div className="grid grid-cols-2 gap-x-[4px] gap-y-[5px] pt-[59px]">
                <Field id="x" label="X" value="300.0" />
                <Field id="y" label="Y" value="300.0" />
                <Field id="length" label="L (Length)" value="800.0" />
                <Field id="width" label="W (Width)" value="400.0" />
              </div>
              <div className="pt-[59px]">
                <SelectField id="measurement" label="Measurement reference" value="Panel surface" />
              </div>
              <div className="grid grid-cols-2 gap-x-[4px] pt-[6px]">
                <Field id="thickness" label="Panel thickness" value="16.0" />
              </div>
            </form>
          </section>
        </div>
        <div className="flex h-[59px] shrink-0 items-center justify-end gap-[4px] pr-[2px]">
          <button aria-label="Confirm" className="flex size-[55px] items-center justify-center border-2 border-[#55514f]">
            <svg viewBox="0 0 34 34" className="size-[34px]">
              <circle cx="17" cy="17" r="16.500" fill="#0f6b22" />
              <path d="M9 18l6 7 11-16" fill="none" stroke="#fff" strokeWidth="3.600" />
            </svg>
          </button>
          <button aria-label="Cancel" className="flex size-[55px] items-center justify-center border-2 border-[#55514f]">
            <svg viewBox="0 0 34 34" className="size-[34px]">
              <circle cx="17" cy="17" r="16.500" fill="#9c1620" />
              <path d="M9.500 9.500l15 15M24.500 9.500l-15 15" stroke="#fff" strokeWidth="5.500" />
            </svg>
          </button>
        </div>
      </div>
    </div>
  );
}

export default function App() {
  return (
    <div className="relative flex min-h-screen bg-black font-['Liberation_Sans',sans-serif] text-[#15151a]">
      <MachineRail />
      <div className="flex min-w-0 flex-1 flex-col">
        <TopBar />
        <div className="flex flex-1">
          <div className="flex min-w-0 flex-1 flex-col bg-[#d8dade]">
            <div className="flex flex-1 pb-[46px]">
              <ProductionList />
              <Preview />
            </div>
            <Footer />
          </div>
          <ToolColumn />
        </div>
      </div>
      <CutDialog />
    </div>
  );
}
